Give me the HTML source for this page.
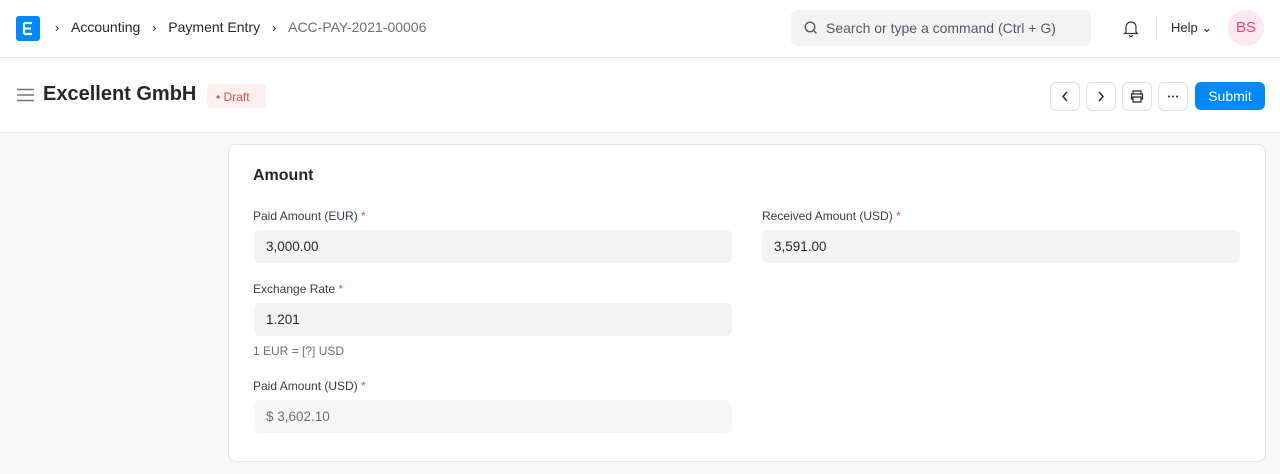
<!DOCTYPE html>
<html><head><style>
*{box-sizing:border-box;margin:0;padding:0}
body{width:1280px;height:474px;overflow:hidden;background:#f8f8f8;font-family:"Liberation Sans",sans-serif;color:#1f272e;position:relative}
.nav{position:absolute;top:0;left:0;width:1280px;height:58px;background:#fff;border-bottom:1px solid #e2e6e9}
.logo{position:absolute;left:16px;top:16px;width:24px;height:25px;background:#0089ff;border-radius:3px}
.bc{position:absolute;top:19px;font-size:14px;color:#1f272e}
.bc b{font-weight:normal;display:inline-block;width:28px;text-align:center;font-size:13px}
.search{position:absolute;left:791px;top:10px;width:300px;height:36px;background:#f3f3f3;border-radius:6px;font-size:14px;color:#4c5a67;padding:10px 0 0 35px}
.head{position:absolute;top:58px;left:0;width:1280px;height:75px;background:#fff;border-bottom:1px solid #e2e6e9}
.btn{position:absolute;top:82px;width:30px;height:29px;border:1px solid #dfe2e5;border-radius:6px;background:#fff}
.card{position:absolute;left:228px;top:144px;width:1038px;height:318px;background:#fff;border:1px solid #e2e6e9;border-radius:8px}
.lbl{position:absolute;font-size:12px;color:#333c44}
.lbl i{color:#e24c4c;font-style:normal}
.inp{position:absolute;width:478px;height:33px;background:#f3f3f3;border-radius:6px;font-size:13.5px;padding:9px 0 0 12px;color:#1f272e}
</style></head><body>
<div class="nav">
<div class="logo"><svg width="24" height="25"><path d="M8 7h8M8 12.5h7M8 18h8M8 7v11" stroke="#fff" stroke-width="2.2" fill="none"/></svg></div>
<div class="bc" style="left:43px"><b>›</b>Accounting<b>›</b>Payment Entry<b>›</b><span style="color:#687178">ACC-PAY-2021-00006</span></div>
<div class="search"><svg style="position:absolute;left:13px;top:11px" width="14" height="14"><circle cx="6" cy="6" r="4.8" stroke="#4c5a67" stroke-width="1.4" fill="none"/><path d="M9.5 9.5l3 3" stroke="#4c5a67" stroke-width="1.4"/></svg>Search or type a command (Ctrl + G)</div>
<svg style="position:absolute;left:1122px;top:19px" width="18" height="18"><path d="M4 13V8a5 5 0 0 1 10 0v5l1.5 1.5h-13z M7.5 16a1.5 1.5 0 0 0 3 0" stroke="#333" stroke-width="1.2" fill="none"/></svg>
<div style="position:absolute;left:1156px;top:16px;width:1px;height:24px;background:#e2e6e9"></div>
<div style="position:absolute;left:1171px;top:20px;font-size:13px">Help ⌄</div>
<div style="position:absolute;left:1228px;top:10px;width:36px;height:36px;border-radius:50%;background:#fde8ee;color:#e8427a;font-size:15px;text-align:center;line-height:36px">BS</div>
</div>
<div class="head">
<svg style="position:absolute;left:17px;top:30px" width="17" height="14"><path d="M0 1.5h17M0 7h17M0 12.5h17" stroke="#6c7680" stroke-width="1.5"/></svg>
<div style="position:absolute;left:43px;top:25px;font-size:20px;font-weight:bold">Excellent GmbH</div>
<div style="position:absolute;left:207px;top:26px;width:59px;height:24px;background:#fff0f0;border-radius:5px;color:#e24c4c;font-size:12px;padding:6px 0 0 9px">• Draft</div>
</div>
<div class="btn" style="left:1050px"><svg width="28" height="27"><path d="M16 9l-4 4.5 4 4.5" stroke="#1f272e" stroke-width="1.5" fill="none"/></svg></div>
<div class="btn" style="left:1086px"><svg width="28" height="27"><path d="M12 9l4 4.5-4 4.5" stroke="#1f272e" stroke-width="1.5" fill="none"/></svg></div>
<div class="btn" style="left:1122px"><svg width="28" height="27"><path d="M10 11V8h8v3M10 16H8.5v-5h11v5H18M10 14h8v5h-8z" stroke="#1f272e" stroke-width="1.2" fill="none"/></svg></div>
<div class="btn" style="left:1158px"><svg width="28" height="27"><circle cx="10" cy="13.5" r="1" fill="#1f272e"/><circle cx="14" cy="13.5" r="1" fill="#1f272e"/><circle cx="18" cy="13.5" r="1" fill="#1f272e"/></svg></div>
<div style="position:absolute;left:1195px;top:82px;width:70px;height:28px;background:#0089ff;border-radius:6px;color:#fff;font-size:14px;text-align:center;line-height:28px">Submit</div>
<div class="card"></div>
<div style="position:absolute;left:253px;top:167px;font-size:16px;font-weight:bold">Amount</div>
<div class="lbl" style="left:253px;top:209px">Paid Amount (EUR) <i>*</i></div>
<div class="inp" style="left:254px;top:230px">3,000.00</div>
<div class="lbl" style="left:762px;top:209px">Received Amount (USD) <i>*</i></div>
<div class="inp" style="left:762px;top:230px">3,591.00</div>
<div class="lbl" style="left:253px;top:282px">Exchange Rate <i>*</i></div>
<div class="inp" style="left:254px;top:303px">1.201</div>
<div class="lbl" style="left:253px;top:344px;color:#687178">1 EUR = [?] USD</div>
<div class="lbl" style="left:253px;top:379px">Paid Amount (USD) <i>*</i></div>
<div class="inp" style="left:254px;top:400px;background:#f7f7f7;color:#687178">$ 3,602.10</div>
</body></html>
